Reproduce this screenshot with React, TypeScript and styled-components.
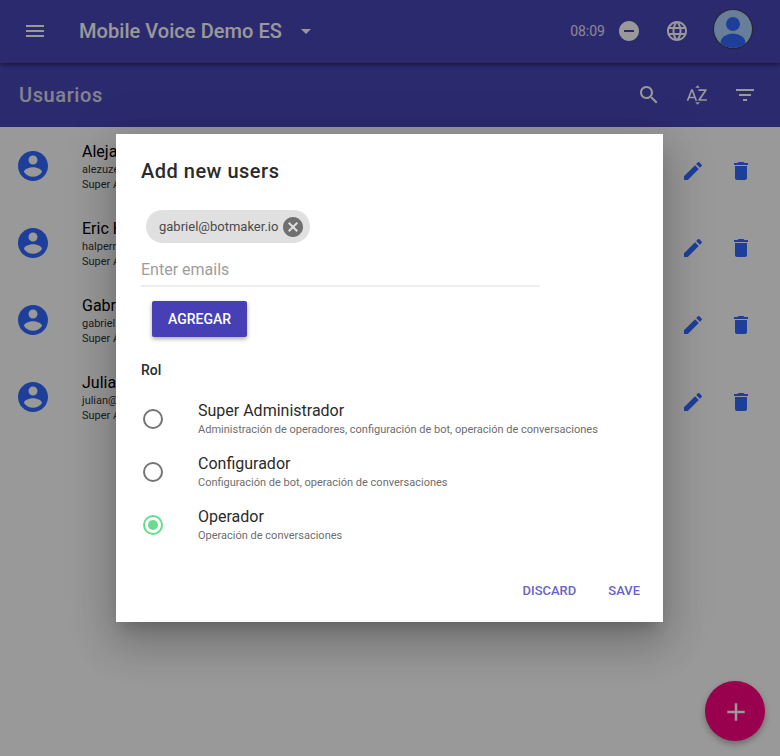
import React from 'react';
import styled, { createGlobalStyle } from 'styled-components';

const paths = {
    menu: 'M3 18h18v-2H3v2zm0-5h18v-2H3v2zm0-7v2h18V6H3z',
    caret: 'M7 10l5 5 5-5z',
    minus: 'M12 2C6.48 2 2 6.48 2 12s4.48 10 10 10 10-4.48 10-10S17.52 2 12 2zm5 11H7v-2h10v2z',
    globe: 'M11.99 2C6.47 2 2 6.48 2 12s4.47 10 9.99 10C17.52 22 22 17.52 22 12S17.52 2 11.99 2zm6.93 6h-2.95c-.32-1.25-.78-2.45-1.38-3.56 1.84.63 3.37 1.91 4.33 3.56zM12 4.04c.83 1.2 1.48 2.53 1.91 3.96h-3.82c.43-1.43 1.08-2.76 1.91-3.96zM4.26 14C4.1 13.36 4 12.69 4 12s.1-1.36.26-2h3.38c-.08.66-.14 1.32-.14 2 0 .68.06 1.34.14 2H4.26zm.82 2h2.95c.32 1.25.78 2.45 1.38 3.56-1.84-.63-3.37-1.9-4.33-3.56zm2.95-8H5.08c.96-1.66 2.49-2.93 4.33-3.56C8.81 5.55 8.35 6.75 8.03 8zM12 19.96c-.83-1.2-1.48-2.53-1.91-3.96h3.82c-.43 1.43-1.08 2.76-1.91 3.96zM14.34 14H9.66c-.09-.66-.16-1.32-.16-2 0-.68.07-1.35.16-2h4.68c.09.65.16 1.32.16 2 0 .68-.07 1.34-.16 2zm.25 5.56c.6-1.11 1.06-2.31 1.38-3.56h2.95c-.96 1.65-2.49 2.93-4.33 3.56zM16.36 14c.08-.66.14-1.32.14-2 0-.68-.06-1.34-.14-2h3.38c.16.64.26 1.31.26 2s-.1 1.36-.26 2h-3.38z',
    search: 'M15.5 14h-.79l-.28-.27C15.41 12.59 16 11.11 16 9.5 16 5.91 13.09 3 9.5 3S3 5.91 3 9.5 5.91 16 9.5 16c1.61 0 3.09-.59 4.23-1.57l.27.28v.79l5 4.99L20.49 19l-4.99-5zm-6 0C7.01 14 5 11.99 5 9.5S7.01 5 9.5 5 14 7.01 14 9.5 11.99 14 9.5 14z',
    sort: 'M14.94 4.66h-4.72l2.36-2.36zm-4.69 14.71h4.66l-2.33 2.33zM6.1 6.27L1.6 17.73h1.84l.92-2.45h5.11l.92 2.45h1.84L7.74 6.27H6.1zm-1.13 7.37l1.94-5.18 1.94 5.18H4.97zm10.76 2.5h6.12v1.59h-8.53v-1.29l5.92-8.56h-5.88v-1.6h8.3v1.26l-5.93 8.6z',
    filter: 'M10 18h4v-2h-4v2zM3 6v2h18V6H3zm3 7h12v-2H6v2z',
    account: 'M12 2C6.48 2 2 6.48 2 12s4.48 10 10 10 10-4.48 10-10S17.52 2 12 2zm0 3c1.66 0 3 1.34 3 3s-1.34 3-3 3-3-1.34-3-3 1.34-3 3-3zm0 14.2c-2.5 0-4.71-1.28-6-3.22.03-1.99 4-3.08 6-3.08 1.99 0 5.97 1.09 6 3.08-1.29 1.94-3.5 3.22-6 3.22z',
    edit: 'M3 17.25V21h3.75L17.81 9.94l-3.75-3.75L3 17.25zM20.71 7.04c.39-.39.39-1.02 0-1.41l-2.34-2.34c-.39-.39-1.02-.39-1.41 0l-1.83 1.83 3.75 3.75 1.83-1.83z',
    trash: 'M6 19c0 1.1.9 2 2 2h8c1.1 0 2-.9 2-2V7H6v12zM19 4h-3.5l-1-1h-5l-1 1H5v2h14V4z',
    cancel: 'M12 2C6.47 2 2 6.47 2 12s4.47 10 10 10 10-4.47 10-10S17.53 2 12 2zm5 13.59L15.59 17 12 13.41 8.41 17 7 15.59 10.59 12 7 8.41 8.41 7 12 10.59 15.59 7 17 8.41 13.41 12 17 15.59z',
    add: 'M19 13h-6v6h-2v-6H5v-2h6V5h2v6h6v2z'
};

type IconName = keyof typeof paths;

function Icon(props: { name: IconName, size?: number, color?: string }) {
    const size = props.size || 24;
    return (
        <svg width={size} height={size} viewBox="0 0 24 24" fill={props.color || '#fff'} style={{ display: 'block', flex: 'none' }}>
            <path d={paths[props.name]} />
        </svg>
    );
}

const GlobalStyle = createGlobalStyle`
    html, body {
        margin: 0;
        height: 756px;
        overflow: hidden;
        background: #fff;
        font-family: Roboto, "Liberation Sans", sans-serif;
    }
`;

const Page = styled.div`
    position: relative;
    width: 780px;
    height: 756px;
    overflow: hidden;
    background: #fff;
`;
const TopBar = styled.header`
    position: relative;
    display: flex;
    align-items: center;
    height: 63px;
    padding: 0 28px 1px 23px;
    box-sizing: border-box;
    background: #4a46b9;
    color: #fff;
    box-shadow: 0 2px 4px rgba(0, 0, 0, 0.45);
`;
const AppTitle = styled.div`
    margin: 0 12px 0 32px;
    font-size: 20px;
    font-weight: 500;
    letter-spacing: 0.05px;
`;
const TopRight = styled.div`
    display: flex;
    align-items: center;
    margin-left: auto;
`;
const Clock = styled.div`
    margin-right: 12px;
    font-size: 14px;
    opacity: 0.85;
`;
const StatusIcon = styled.div`
    margin-right: 24px;
`;
const Avatar = styled.div`
    width: 38px;
    height: 38px;
    margin: -4px 0 0 1px;
    border-radius: 50%;
    overflow: hidden;
    background: #b0d4ff;
    box-shadow: 0 0 0 1px rgba(60, 60, 60, 0.9);
`;
const SubBar = styled.div`
    display: flex;
    align-items: center;
    height: 64px;
    padding: 0 23px 0 19px;
    box-sizing: border-box;
    background: #4a46b9;
`;
const SubTitle = styled.div`
    font-size: 20px;
    font-weight: 500;
    letter-spacing: 0.6px;
    color: #fff;
    opacity: 0.8;
`;
const SubIcons = styled.div`
    display: flex;
    gap: 24px;
    margin-left: auto;
`;
const UserRow = styled.div`
    display: flex;
    align-items: center;
    height: 77px;
    padding: 0 27px 0 15px;
`;
const UserText = styled.div`
    margin-left: 31px;
    padding-top: 3px;
    color: #333;
    font-size: 11px;
    line-height: 15px;
`;
const UserName = styled.div`
    margin-bottom: 1px;
    color: #000;
    font-size: 16px;
    line-height: 19px;
`;
const UserActions = styled.div`
    display: flex;
    gap: 24px;
    margin-left: auto;
    padding-top: 10px;
`;
const Fab = styled.div`
    position: absolute;
    right: 15px;
    bottom: 15px;
    display: flex;
    align-items: center;
    justify-content: center;
    width: 60px;
    height: 60px;
    padding: 1px 0 0 1px;
    box-sizing: border-box;
    border-radius: 50%;
    background: #ff0080;
    box-shadow: 0 3px 6px rgba(0, 0, 0, 0.3);
`;
const Scrim = styled.div`
    position: absolute;
    inset: 0;
    display: flex;
    justify-content: center;
    align-items: flex-start;
    padding: 134px 1px 0 0;
    box-sizing: border-box;
    background: rgba(0, 0, 0, 0.4);
`;
const Dialog = styled.div`
    width: 547px;
    height: 488px;
    padding: 25px 23px 0 25px;
    box-sizing: border-box;
    background: #fff;
    color: #2b2b2b;
    box-shadow: 0 11px 15px -7px rgba(0, 0, 0, 0.2), 0 24px 38px 3px rgba(0, 0, 0, 0.14), 0 9px 46px 8px rgba(0, 0, 0, 0.12);
`;
const DialogTitle = styled.div`
    font-size: 20px;
    font-weight: 500;
    line-height: 24px;
    letter-spacing: 0.5px;
`;
const Chip = styled.div`
    display: inline-flex;
    align-items: center;
    height: 33px;
    margin: 27px 0 0 5px;
    padding: 0 5px 0 13px;
    border-radius: 17px;
    background: #e0e0e0;
    color: #4a4a4a;
    font-size: 13px;
`;
const ChipClose = styled.div`
    margin-left: 3px;
`;
const EmailInput = styled.div`
    width: 399px;
    height: 44px;
    box-sizing: border-box;
    padding-top: 17px;
    border-bottom: 2px solid #eeeeee;
    color: #9e9e9e;
    font-size: 16px;
    line-height: 19px;
`;
const AddButton = styled.div`
    display: flex;
    align-items: center;
    justify-content: center;
    width: 95px;
    height: 36px;
    margin: 14px 0 0 11px;
    border-radius: 2px;
    background: #473fb5;
    color: #fff;
    font-size: 14px;
    font-weight: 500;
    box-shadow: 0 2px 4px rgba(0, 0, 0, 0.35);
`;
const RoleLabel = styled.div`
    margin: 25px 0 14px 0;
    font-size: 14px;
    font-weight: 500;
    line-height: 16px;
`;
const RoleRow = styled.div`
    display: flex;
    align-items: center;
    height: 53px;
`;
const Radio = styled.div<{ $on?: boolean }>`
    display: flex;
    align-items: center;
    justify-content: center;
    width: 20px;
    height: 20px;
    margin-left: 2px;
    border-radius: 50%;
    border: 2px solid ${props => props.$on ? '#69db8f' : '#757575'};
    box-sizing: border-box;
`;
const RadioDot = styled.div`
    width: 10px;
    height: 10px;
    border-radius: 50%;
    background: #69db8f;
`;
const RoleText = styled.div`
    margin-left: 35px;
`;
const RoleName = styled.div`
    font-size: 16px;
    line-height: 19px;
`;
const RoleHint = styled.div`
    margin-top: 3px;
    color: #6e6e6e;
    font-size: 11px;
    line-height: 13px;
`;
const DialogActions = styled.div`
    display: flex;
    justify-content: flex-end;
    gap: 32px;
    margin-top: 32px;
`;
const TextButton = styled.div`
    color: #6a63c8;
    font-size: 13px;
    font-weight: 500;
    line-height: 16px;
`;

const blue = '#3369ff';

const users = [
    { name: 'Aleja', mail: 'alezuze' },
    { name: 'Eric H', mail: 'halperr' },
    { name: 'Gabr', mail: 'gabriel' },
    { name: 'Julia', mail: 'julian@' }
];

const roles = [
    { name: 'Super Administrador', hint: 'Administración de operadores, configuración de bot, operación de conversaciones' },
    { name: 'Configurador', hint: 'Configuración de bot, operación de conversaciones' },
    { name: 'Operador', hint: 'Operación de conversaciones', on: true }
];

export default function App() {
    return (
        <Page>
            <GlobalStyle />
            <TopBar>
                <Icon name="menu" />
                <AppTitle>Mobile Voice Demo ES</AppTitle>
                <Icon name="caret" />
                <TopRight>
                    <Clock>08:09</Clock>
                    <StatusIcon><Icon name="minus" /></StatusIcon>
                    <StatusIcon><Icon name="globe" /></StatusIcon>
                    <Avatar>
                        <svg width="38" height="38" viewBox="0 0 38 38" style={{ display: 'block' }}>
                            <circle cx="19" cy="14" r="7" fill={blue} />
                            <ellipse cx="19" cy="33" rx="12.5" ry="9.5" fill={blue} />
                        </svg>
                    </Avatar>
                </TopRight>
            </TopBar>
            <SubBar>
                <SubTitle>Usuarios</SubTitle>
                <SubIcons>
                    <Icon name="search" />
                    <Icon name="sort" />
                    <Icon name="filter" />
                </SubIcons>
            </SubBar>
            {users.map(user => (
                <UserRow key={user.mail}>
                    <Icon name="account" size={36} color={blue} />
                    <UserText>
                        <UserName>{user.name}</UserName>
                        <div>{user.mail}</div>
                        <div>Super A</div>
                    </UserText>
                    <UserActions>
                        <Icon name="edit" color={blue} />
                        <Icon name="trash" color={blue} />
                    </UserActions>
                </UserRow>
            ))}
            <Fab><Icon name="add" size={30} /></Fab>
            <Scrim>
                <Dialog>
                    <DialogTitle>Add new users</DialogTitle>
                    <Chip>
                        gabriel@botmaker.io
                        <ChipClose><Icon name="cancel" size={24} color="#707070" /></ChipClose>
                    </Chip>
                    <EmailInput>Enter emails</EmailInput>
                    <AddButton>AGREGAR</AddButton>
                    <RoleLabel>Rol</RoleLabel>
                    {roles.map(role => (
                        <RoleRow key={role.name}>
                            <Radio $on={role.on}>{role.on && <RadioDot />}</Radio>
                            <RoleText>
                                <RoleName>{role.name}</RoleName>
                                <RoleHint>{role.hint}</RoleHint>
                            </RoleText>
                        </RoleRow>
                    ))}
                    <DialogActions>
                        <TextButton>DISCARD</TextButton>
                        <TextButton>SAVE</TextButton>
                    </DialogActions>
                </Dialog>
            </Scrim>
        </Page>
    );
}
